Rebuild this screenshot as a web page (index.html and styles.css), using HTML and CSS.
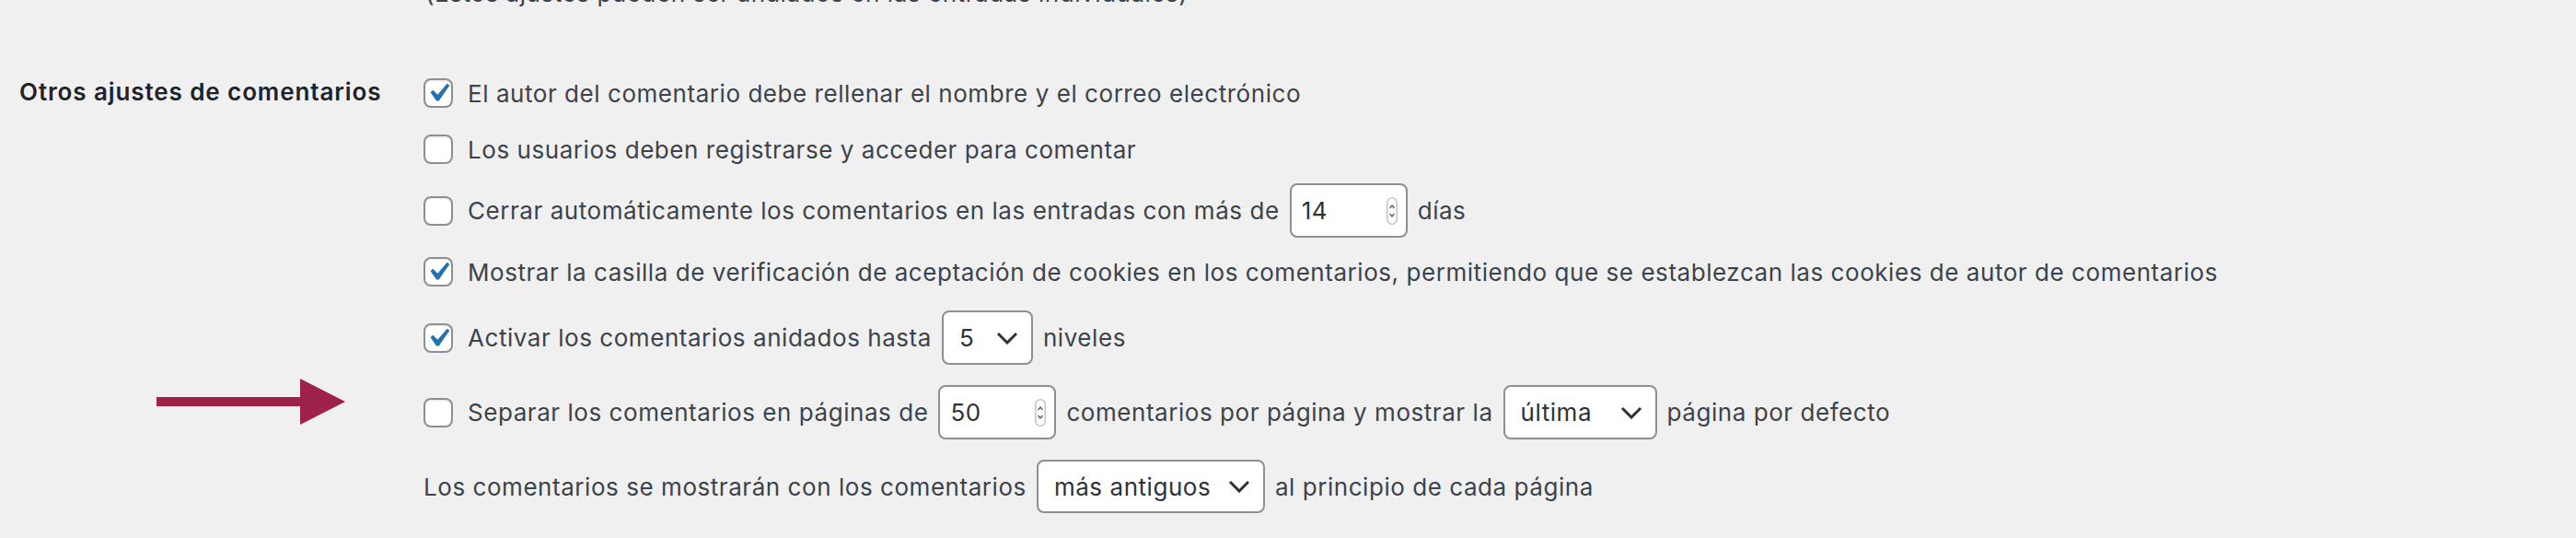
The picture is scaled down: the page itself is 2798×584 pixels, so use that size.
FILE: index.html
```html
<!DOCTYPE html>
<html lang="es">
<head>
    <meta charset="UTF-8">
    <meta name="viewport" content="width=device-width, initial-scale=1.0">
    <title>Ajustes de comentarios</title>
    <link rel="stylesheet" href="styles.css">
</head>
<body>
    <div class="settings">
        <div class="side"></div>
        <p class="note">(Estos ajustes pueden ser anulados en las entradas individuales)</p>

        <div class="side">
            <h3 class="row-title">Otros ajustes de comentarios</h3>
        </div>
        <div class="options">
            <label class="option first">
                <span class="check checked">
                    <svg viewBox="0 0 20 20"><path d="M14.83 4.89l1.34.94-5.81 8.38H9.02L5.78 9.67l1.34-1.25 2.57 2.4z"/></svg>
                </span>
                <span>El autor del comentario debe rellenar el nombre y el correo electrónico</span>
            </label>
            <label class="option">
                <span class="check"></span>
                <span>Los usuarios deben registrarse y acceder para comentar</span>
            </label>
            <label class="option with-field close-days">
                <span class="check"></span>
                <span>Cerrar automáticamente los comentarios en las entradas con más de</span>
                <span class="field number">
                    <span class="value">14</span>
                    <svg class="spin" viewBox="0 0 12 30"><rect x="0.75" y="0.75" width="10.5" height="28.5" rx="5.25"/><path d="M3.5 12l2.5-3 2.5 3M3.5 18l2.5 3 2.5-3"/></svg>
                </span>
                <span>días</span>
            </label>
            <label class="option cookies">
                <span class="check checked">
                    <svg viewBox="0 0 20 20"><path d="M14.83 4.89l1.34.94-5.81 8.38H9.02L5.78 9.67l1.34-1.25 2.57 2.4z"/></svg>
                </span>
                <span>Mostrar la casilla de verificación de aceptación de cookies en los comentarios, permitiendo que se establezcan las cookies de autor de comentarios</span>
            </label>
            <label class="option with-field threads">
                <span class="check checked">
                    <svg viewBox="0 0 20 20"><path d="M14.83 4.89l1.34.94-5.81 8.38H9.02L5.78 9.67l1.34-1.25 2.57 2.4z"/></svg>
                </span>
                <span>Activar los comentarios anidados hasta</span>
                <span class="field select levels">
                    <span class="value">5</span>
                    <svg class="chevron" viewBox="0 0 24 14"><path d="M2 2l10 10 10-10"/></svg>
                </span>
                <span>niveles</span>
            </label>
            <label class="option with-field paged">
                <span class="check"></span>
                <span>Separar los comentarios en páginas de</span>
                <span class="field number">
                    <span class="value">50</span>
                    <svg class="spin" viewBox="0 0 12 30"><rect x="0.75" y="0.75" width="10.5" height="28.5" rx="5.25"/><path d="M3.5 12l2.5-3 2.5 3M3.5 18l2.5 3 2.5-3"/></svg>
                </span>
                <span>comentarios por página y mostrar la</span>
                <span class="field select page">
                    <span class="value">última</span>
                    <svg class="chevron" viewBox="0 0 24 14"><path d="M2 2l10 10 10-10"/></svg>
                </span>
                <span>página por defecto</span>
            </label>
            <div class="option with-field order-row">
                <span>Los comentarios se mostrarán con los comentarios</span>
                <span class="field select order">
                    <span class="value">más antiguos</span>
                    <svg class="chevron" viewBox="0 0 24 14"><path d="M2 2l10 10 10-10"/></svg>
                </span>
                <span>al principio de cada página</span>
            </div>

            <!-- flecha de anotación -->
            <svg class="pointer" viewBox="0 0 205 50">
                <rect x="0" y="20" width="158" height="10"/>
                <polygon points="156,0 205,25 156,50"/>
            </svg>
        </div>
    </div>
</body>
</html>
```

FILE: styles.css
```css
body {
    font-family: Inter, "Liberation Sans", Arial, sans-serif;
    background-color: #f0f0f1;
    color: #3c434a;
    margin: 0;
    padding: 0;
    font-size: 26px;
    letter-spacing: 0.55px;
    overflow: hidden;
}
.settings {
    display: grid;
    grid-template-columns: 460px 1fr;
    position: relative;
}
.note {
    margin: -25px 0 0;
    line-height: 36px;
    padding-left: 2px;
}
.side {
    padding-left: 21px;
}
.row-title {
    margin: 73px 0 0;
    font-size: 26px;
    font-weight: 600;
    letter-spacing: 0.9px;
    line-height: 32px;
    color: #1d2327;
}
.options {
    display: flex;
    flex-direction: column;
}
.option {
    display: flex;
    align-items: center;
    gap: 11px;
    min-height: 32px;
    margin-top: 29px;
    white-space: nowrap;
}
.option.first {
    margin-top: 74px;
}
.option.with-field {
    min-height: 59px;
}
.option.close-days {
    margin-top: 21px;
}
.option.cookies {
    margin-top: 21px;
}
.option.threads {
    margin-top: 26px;
}
.option.paged {
    margin-top: 22px;
}
.option.order-row {
    margin-top: 22px;
    min-height: 58px;
}
.check {
    flex: none;
    width: 32px;
    height: 32px;
    box-sizing: border-box;
    border: 2px solid #8c8f94;
    border-radius: 8px;
    background-color: #fff;
    margin-right: 5px;
    box-shadow: inset 0 1px 2px rgba(0, 0, 0, 0.1);
}
.check svg {
    display: block;
    width: 40px;
    height: 40px;
    margin: -6px 0 0 -6px;
    fill: #2271b1;
}
.field {
    flex: none;
    display: flex;
    align-items: center;
    justify-content: space-between;
    box-sizing: border-box;
    height: 59px;
    background-color: #fff;
    border: 2px solid #8c8f94;
    border-radius: 8px;
    color: #2c3338;
}
.field.number {
    width: 128px;
    padding: 0 9px 0 11px;
}
.spin {
    width: 12px;
    height: 30px;
}
.spin rect {
    fill: #fff;
    stroke: #c3c4c7;
    stroke-width: 1.5;
}
.spin path {
    fill: none;
    stroke: #50575e;
    stroke-width: 1.3;
}
.field.select {
    padding: 0 14px 0 17px;
}
.field.levels {
    width: 99px;
}
.field.page {
    width: 167px;
}
.field.order {
    width: 248px;
    height: 58px;
}
.chevron {
    width: 24px;
    height: 14px;
    fill: none;
    stroke: #2c3338;
    stroke-width: 3;
}
.pointer {
    position: absolute;
    left: 170px;
    top: 411px;
    width: 205px;
    height: 50px;
    fill: #9d2149;
}
```
